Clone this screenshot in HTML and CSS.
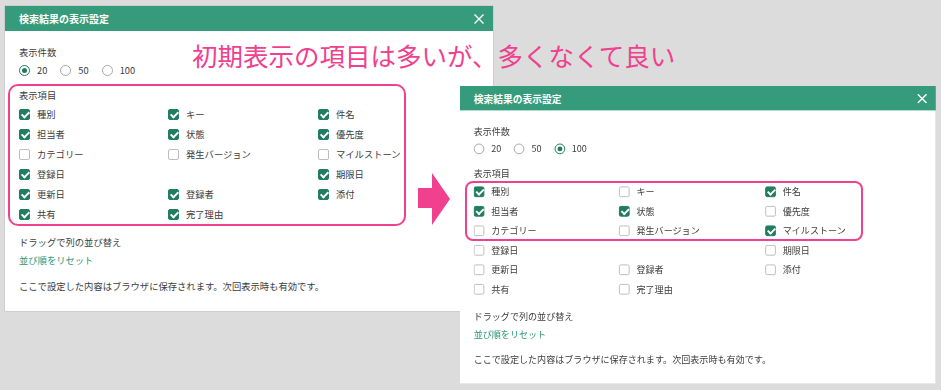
FILE: index.html
```html
<!DOCTYPE html>
<html lang="ja">
<head>
    <meta charset="UTF-8">
    <meta name="viewport" content="width=device-width, initial-scale=1.0">
    <title>検索結果の表示設定</title>
    <link rel="stylesheet" href="styles.css">
</head>
<body>
    <div class="canvas">
        <section class="dialog dialog-before">
            <header class="dialog-head">
                <h2>検索結果の表示設定</h2>
                <svg class="close" width="10" height="10" viewBox="0 0 10 10"><path d="M0.5 0.5L9.5 9.5M9.5 0.5L0.5 9.5"/></svg>
            </header>
            <div class="dialog-body">
                <p class="label">表示件数</p>
                <div class="radios">
                    <span class="radio"><span class="dot on"></span>20</span>
                    <span class="radio"><span class="dot"></span>50</span>
                    <span class="radio"><span class="dot"></span>100</span>
                </div>
                <p class="label section">表示項目</p>
                <ul class="fields">
                    <li><span class="box on"></span>種別</li>
                    <li><span class="box on"></span>キー</li>
                    <li><span class="box on"></span>件名</li>
                    <li><span class="box on"></span>担当者</li>
                    <li><span class="box on"></span>状態</li>
                    <li><span class="box on"></span>優先度</li>
                    <li><span class="box"></span>カテゴリー</li>
                    <li><span class="box"></span>発生バージョン</li>
                    <li><span class="box"></span>マイルストーン</li>
                    <li><span class="box on"></span>登録日</li>
                    <li></li>
                    <li><span class="box on"></span>期限日</li>
                    <li><span class="box on"></span>更新日</li>
                    <li><span class="box on"></span>登録者</li>
                    <li><span class="box on"></span>添付</li>
                    <li><span class="box on"></span>共有</li>
                    <li><span class="box on"></span>完了理由</li>
                </ul>
                <p class="label drag">ドラッグで列の並び替え</p>
                <a class="reset">並び順をリセット</a>
                <p class="note">ここで設定した内容はブラウザに保存されます。次回表示時も有効です。</p>
            </div>
        </section>

        <section class="dialog dialog-after">
            <header class="dialog-head">
                <h2>検索結果の表示設定</h2>
                <svg class="close" width="10" height="10" viewBox="0 0 10 10"><path d="M0.5 0.5L9.5 9.5M9.5 0.5L0.5 9.5"/></svg>
            </header>
            <div class="dialog-body">
                <p class="label">表示件数</p>
                <div class="radios">
                    <span class="radio"><span class="dot"></span>20</span>
                    <span class="radio"><span class="dot"></span>50</span>
                    <span class="radio"><span class="dot on"></span>100</span>
                </div>
                <p class="label section">表示項目</p>
                <ul class="fields">
                    <li><span class="box on"></span>種別</li>
                    <li><span class="box"></span>キー</li>
                    <li><span class="box on"></span>件名</li>
                    <li><span class="box on"></span>担当者</li>
                    <li><span class="box on"></span>状態</li>
                    <li><span class="box"></span>優先度</li>
                    <li><span class="box"></span>カテゴリー</li>
                    <li><span class="box"></span>発生バージョン</li>
                    <li><span class="box on"></span>マイルストーン</li>
                    <li><span class="box"></span>登録日</li>
                    <li></li>
                    <li><span class="box"></span>期限日</li>
                    <li><span class="box"></span>更新日</li>
                    <li><span class="box"></span>登録者</li>
                    <li><span class="box"></span>添付</li>
                    <li><span class="box"></span>共有</li>
                    <li><span class="box"></span>完了理由</li>
                </ul>
                <p class="label drag">ドラッグで列の並び替え</p>
                <a class="reset">並び順をリセット</a>
                <p class="note">ここで設定した内容はブラウザに保存されます。次回表示時も有効です。</p>
            </div>
        </section>

        <!-- annotations drawn over the screenshots -->
        <p class="caption">初期表示の項目は多いが、多くなくて良い</p>
        <div class="mark mark-before"></div>
        <div class="mark mark-after"></div>
        <svg class="arrow" width="32" height="52" viewBox="0 0 32 52"><polygon points="0,15 14,15 14,0 32,26 14,52 14,35 0,35"/></svg>
    </div>
</body>
</html>
```

FILE: styles.css
```css
body{
    margin: 0;
    padding: 0;
    background-color: #dcdcdc;
    font-family: "Noto Sans CJK JP", "Noto Sans", sans-serif;
}
.canvas{
    position: relative;
    width: 941px;
    height: 390px;
    overflow: hidden;
}
.dialog{
    position: absolute;
    width: 488px;
    height: 305px;
    background-color: #fff;
    box-shadow: 0 0 1px rgba(0, 0, 0, 0.4);
}
.dialog-before{
    left: 5px;
    top: 6px;
}
.dialog-after{
    left: 460px;
    top: 86px;
    transform: scale(0.975);
    transform-origin: 0 0;
}
.dialog-head{
    height: 25px;
    display: flex;
    align-items: center;
    justify-content: space-between;
    padding: 0 9px 0 14px;
    background-color: #359b7b;
    color: #fff;
}
.dialog-head h2{
    margin: 0;
    font-size: 10px;
    font-weight: 700;
}
.close path{
    stroke: #fff;
    stroke-width: 1.4;
    fill: none;
}
.dialog-body{
    padding: 12px 14px 0;
    font-size: 9.3px;
    line-height: 18px;
    color: #3c3c3c;
}
.label{
    margin: 0;
}
.radios{
    display: flex;
    align-items: center;
    height: 18px;
}
.radio{
    display: flex;
    align-items: center;
    gap: 7px;
    margin-right: 13px;
}
.dot{
    width: 11px;
    height: 11px;
    box-sizing: border-box;
    border: 1px solid #a8a8a8;
    border-radius: 50%;
    display: flex;
    align-items: center;
    justify-content: center;
}
.dot.on{
    border: 1.5px solid #1f7b5f;
}
.dot.on::after{
    content: "";
    width: 5px;
    height: 5px;
    border-radius: 50%;
    background-color: #1f7b5f;
}
.section{
    margin-top: 7px;
}
.fields{
    list-style: none;
    margin: 0;
    padding: 0;
    display: grid;
    grid-template-columns: 149px 150px 150px;
    grid-auto-rows: 20px;
}
.fields li{
    display: flex;
    align-items: center;
    gap: 7px;
}
.box{
    width: 11px;
    height: 11px;
    box-sizing: border-box;
    border: 1px solid #bdbdbd;
    border-radius: 2px;
    position: relative;
}
.box.on{
    border-color: #217d61;
    background-color: #217d61;
}
.box.on::after{
    content: "";
    position: absolute;
    left: 3px;
    top: 0px;
    width: 3px;
    height: 6px;
    border-right: 2px solid #fff;
    border-bottom: 2px solid #fff;
    transform: rotate(45deg);
}
.drag{
    margin-top: 9px;
}
.reset{
    display: block;
    color: #2a9676;
    cursor: pointer;
}
.note{
    margin: 8px 0 0;
}
.caption{
    position: absolute;
    left: 192px;
    top: 40px;
    margin: 0;
    font-size: 25.5px;
    line-height: 30px;
    color: #f0408e;
    white-space: nowrap;
}
.mark{
    position: absolute;
    box-sizing: border-box;
    border: 2px solid #f0408e;
}
.mark-before{
    left: 8px;
    top: 84px;
    width: 398px;
    height: 142px;
    border-radius: 10px;
}
.mark-after{
    left: 465px;
    top: 181px;
    width: 398px;
    height: 60px;
    border-radius: 8px;
}
.arrow{
    position: absolute;
    left: 418px;
    top: 173px;
}
.arrow polygon{
    fill: #f0408e;
}
```
